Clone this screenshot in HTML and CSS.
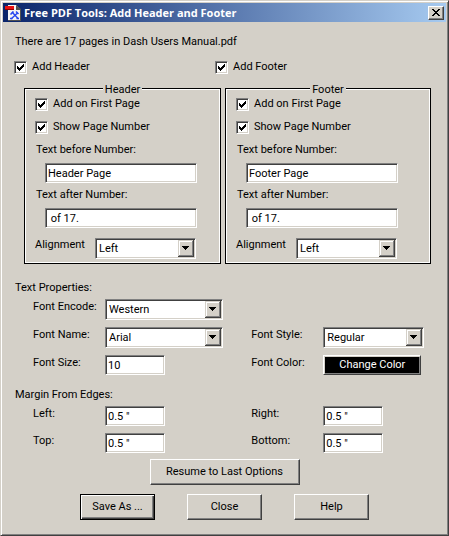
FILE: index.html
```html
<!DOCTYPE html>
<html lang="en">
<head>
  <meta charset="UTF-8" />
  <meta name="viewport" content="width=device-width, initial-scale=1.0"/>
  <title>Free PDF Tools: Add Header and Footer</title>
  <link rel="stylesheet" href="styles.css">
</head>
<body>

<div class="dialog">
  <header class="titlebar">
    <svg class="app-icon" viewBox="0 0 16 16">
      <path d="M3 0h8l4 4v12H3z" fill="#f4f4f4"/>
      <path d="M11 0v4h4z" fill="#b8b8b8"/>
      <path d="M11 0l5 4v12H3v-1h12V5h-4z" fill="#505050"/>
      <path d="M0 1h9v3H0z" fill="#e81010"/>
      <path d="M0 4h9v1H0z" fill="#900000"/>
      <path d="M7 7l6 6.500M12.500 8L6 14" stroke="#2848f0" stroke-width="1.400" fill="none"/>
      <path d="M5.500 9.500l3-3M11 6.500l2.500 2.500M5 13.500h2.500M11.500 13.500H14" stroke="#2848f0" stroke-width="1.600" fill="none"/>
    </svg>
    <h1 class="title">Free PDF Tools: Add Header and Footer</h1>
    <button class="close-btn" type="button" aria-label="Close window">
      <svg width="8" height="7" viewBox="0 0 8 7" shape-rendering="crispEdges">
        <path d="M0 0h2v1h1v1h2V1h1V0h2v1H7v1H6v1H5v1h1v1h1v1h1v1H6V6H5V5H3v1H2v1H0V6h1V5h1V4h1V3H2V2H1V1H0z"/>
      </svg>
    </button>
  </header>

  <form class="content">
    <p class="intro">There are 17 pages in Dash Users Manual.pdf</p>

    <div class="toggles">
      <label class="check"><input type="checkbox" checked /> Add Header</label>
      <label class="check"><input type="checkbox" checked /> Add Footer</label>
    </div>

    <div class="groups">
      <fieldset class="group">
        <legend>Header</legend>
        <label class="check"><input type="checkbox" checked /> Add on First Page</label>
        <label class="check"><input type="checkbox" checked /> Show Page Number</label>
        <label class="text-label" for="headerBefore">Text before Number:</label>
        <input class="field" type="text" id="headerBefore" value="Header Page" />
        <label class="text-label" for="headerAfter">Text after Number:</label>
        <input class="field" type="text" id="headerAfter" value=" of 17." />
        <div class="align-row">
          <label for="headerAlign">Alignment</label>
          <select class="select" id="headerAlign">
            <option>Left</option>
          </select>
        </div>
      </fieldset>

      <fieldset class="group">
        <legend>Footer</legend>
        <label class="check"><input type="checkbox" checked /> Add on First Page</label>
        <label class="check"><input type="checkbox" checked /> Show Page Number</label>
        <label class="text-label" for="footerBefore">Text before Number:</label>
        <input class="field" type="text" id="footerBefore" value="Footer Page" />
        <label class="text-label" for="footerAfter">Text after Number:</label>
        <input class="field" type="text" id="footerAfter" value=" of 17." />
        <div class="align-row">
          <label for="footerAlign">Alignment</label>
          <select class="select" id="footerAlign">
            <option>Left</option>
          </select>
        </div>
      </fieldset>
    </div>

    <h2 class="section-title">Text Properties:</h2>
    <div class="props">
      <label for="fontEncode">Font Encode:</label>
      <select class="select select-wide" id="fontEncode">
        <option>Western</option>
      </select>
      <label class="new-row" for="fontName">Font Name:</label>
      <select class="select select-wide" id="fontName">
        <option>Arial</option>
      </select>
      <label for="fontStyle">Font Style:</label>
      <select class="select" id="fontStyle">
        <option>Regular</option>
      </select>
      <label for="fontSize">Font Size:</label>
      <input class="field field-short" type="text" id="fontSize" value="10" />
      <label for="fontColor">Font Color:</label>
      <button class="color-btn" type="button" id="fontColor">Change Color</button>
    </div>

    <h2 class="section-title">Margin From Edges:</h2>
    <div class="props">
      <label for="marginLeft">Left:</label>
      <input class="field field-short" type="text" id="marginLeft" value='0.5 "' />
      <label for="marginRight">Right:</label>
      <input class="field field-short" type="text" id="marginRight" value='0.5 "' />
      <label for="marginTop">Top:</label>
      <input class="field field-short" type="text" id="marginTop" value='0.5 "' />
      <label for="marginBottom">Bottom:</label>
      <input class="field field-short" type="text" id="marginBottom" value='0.5 "' />
    </div>

    <div class="actions">
      <button class="btn btn-wide" type="button">Resume to Last Options</button>
    </div>
    <div class="actions">
      <button class="btn btn-default" type="button">Save As ...</button>
      <button class="btn" type="button">Close</button>
      <button class="btn" type="button">Help</button>
    </div>
  </form>
</div>

</body>
</html>
```
FILE: styles.css
```css
* {
  box-sizing: border-box;
}
body {
  margin: 0;
  background: #d4d0c8;
  color: #000;
}
body, input, button, select {
  font-family: Roboto, "Liberation Sans", sans-serif;
  font-size: 11px;
  line-height: 14px;
}
.dialog {
  min-height: 100vh;
  padding: 2px;
  background: #d4d0c8;
  border: 1px solid;
  border-color: #d4d0c8 #404040 #404040 #d4d0c8;
  box-shadow: inset 1px 1px #fff, inset -1px -1px #808080;
}

/* title bar */
.titlebar {
  display: flex;
  align-items: center;
  height: 19px;
  padding: 0 2px;
  background: linear-gradient(to right, #0a246a, #a6caf0);
}
.app-icon {
  width: 16px;
  height: 16px;
}
.title {
  flex: 1;
  margin: 0 0 0 3px;
  color: #fff;
  font-family: "Open Sans", "DejaVu Sans", sans-serif;
  font-size: 11px;
  font-weight: bold;
}
.close-btn {
  display: flex;
  align-items: center;
  justify-content: center;
  width: 16px;
  height: 14px;
  padding: 0;
  background: #d4d0c8;
  border: 1px solid;
  border-color: #fff #404040 #404040 #fff;
  box-shadow: inset -1px -1px #808080;
}

/* body of the dialog */
.content {
  padding: 13px 0 10px;
}
.intro {
  margin: 0 12px;
}
.toggles {
  display: grid;
  grid-template-columns: 1fr 1fr;
  margin: 11px 30px 8px 11px;
}
.check {
  display: flex;
  align-items: center;
  gap: 5px;
}
.check input {
  appearance: none;
  width: 13px;
  height: 13px;
  margin: 0;
  border: 1px solid;
  border-color: #808080 #fff #fff #808080;
  background: #fff url("data:image/svg+xml,%3Csvg xmlns='http://www.w3.org/2000/svg' width='7' height='7' shape-rendering='crispEdges'%3E%3Cpath d='M0 2h1v1h1v1h1V3h1V2h1V1h1V0h1v3H6v1H5v1H4v1H3v1H2V6H1V5H0z'/%3E%3C/svg%3E") 2px 2px no-repeat;
  box-shadow: inset 1px 1px #404040, inset -1px -1px #d4d0c8;
}
.check input:not(:checked) {
  background-image: none;
}

.groups {
  display: grid;
  grid-template-columns: 197fr 206fr;
  gap: 4px;
  margin: 0 15px 0 21px;
}
.group {
  min-width: 0;
  margin: 0;
  padding: 2px 10px 4px;
  border: 1px solid #000;
  box-shadow: inset 0 0 0 1px #fff;
}
.group legend {
  margin: 0 auto;
  padding: 3px 2px 0;
  line-height: 10px;
  background: #d4d0c8;
}
.group .check {
  margin-bottom: 9px;
}
.text-label {
  display: block;
  margin-left: 1px;
}
.field {
  display: block;
  width: 152px;
  height: 20px;
  padding: 1px 2px 0;
  background: #fff;
  border: 1px solid;
  border-color: #808080 #fff #fff #808080;
  box-shadow: inset 1px 1px #404040, inset -1px -1px #d4d0c8;
}
.group .field {
  margin: 6px 0 5px 10px;
}
.field-short {
  width: 60px;
}
.align-row {
  display: flex;
  justify-content: space-between;
  width: 161px;
  margin-top: 10px;
}

/* drop-downs get a raised arrow button on the right */
.select {
  appearance: none;
  width: 101px;
  height: 21px;
  padding: 0 18px 0 3px;
  border: 1px solid;
  border-color: #808080 #fff #fff #808080;
  border-radius: 0;
  color: #000;
  background: #fff url("data:image/svg+xml,%3Csvg xmlns='http://www.w3.org/2000/svg' width='16' height='17' shape-rendering='crispEdges'%3E%3Cpath fill='%23404040' d='M0 0h16v17H0z'/%3E%3Cpath fill='%23d4d0c8' d='M0 0h15v16H0z'/%3E%3Cpath fill='%23808080' d='M1 1h14v15H1z'/%3E%3Cpath fill='%23fff' d='M1 1h13v14H1z'/%3E%3Cpath fill='%23d4d0c8' d='M2 2h12v13H2z'/%3E%3Cpath d='M4 6h7v1h-1v1H9v1H8v1H7V9H6V8H5V7H4z'/%3E%3C/svg%3E") right 1px top 1px no-repeat;
  box-shadow: inset 1px 1px #404040, inset -1px -1px #d4d0c8;
}
.select-wide {
  width: 118px;
}

.section-title {
  margin: 17px 12px 4px;
  font-size: 11px;
  font-weight: normal;
}
.props {
  display: grid;
  grid-template-columns: 72px 4fr 72px 3fr;
  row-gap: 7px;
  align-items: start;
  margin: 0 13px 0 30px;
}
.props label {
  padding-top: 1px;
}
.props + .section-title {
  margin-top: 13px;
}
.new-row {
  grid-column-start: 1;
}
.color-btn {
  width: 98px;
  height: 20px;
  padding: 0;
  color: #fff;
  background: #000;
  border: 1px solid;
  border-color: #fff #404040 #404040 #fff;
  box-shadow: inset 1px 1px #d4d0c8, inset -1px -1px #808080;
}

/* buttons */
.actions {
  display: flex;
  justify-content: center;
  gap: 32px;
  margin-top: 6px;
}
.actions + .actions {
  margin-top: 9px;
}
.btn {
  width: 75px;
  height: 26px;
  padding: 0;
  color: #000;
  background: #d4d0c8;
  border: 1px solid;
  border-color: #fff #404040 #404040 #fff;
  box-shadow: inset -1px -1px #808080;
}
.btn-wide {
  width: 150px;
}
.btn-default {
  border-color: #000;
  box-shadow: inset 1px 1px #fff, inset -1px -1px #404040, inset -2px -2px #808080;
}
```
